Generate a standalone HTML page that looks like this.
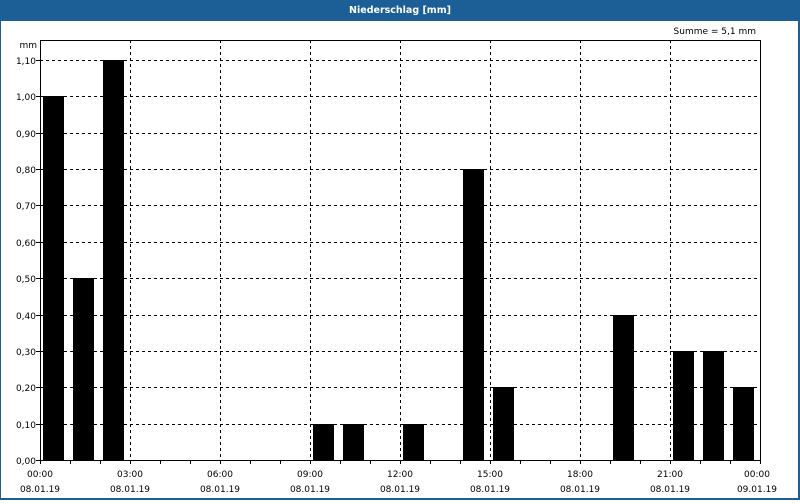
<!DOCTYPE html><html><head><style>body{margin:0;width:800px;height:500px;overflow:hidden;background:#fff;font-family:"DejaVu Sans","Liberation Sans",sans-serif}</style></head><body>
<svg width="800" height="500" xmlns="http://www.w3.org/2000/svg" font-family="DejaVu Sans, Liberation Sans, sans-serif" font-size="9">
<rect x="0" y="0" width="800" height="500" fill="#1c5f96"/>
<rect x="1" y="21" width="797" height="477" fill="#fff"/>
<text x="400" y="13" fill="#fff" font-weight="bold" text-anchor="middle" font-size="9.5">Niederschlag [mm]</text>
<text x="756" y="34" text-anchor="end">Summe = 5,1 mm</text>
<text x="37" y="48" text-anchor="end">mm</text>
<g stroke="#000" stroke-dasharray="3,3" stroke-width="1">
<path d="M40 60.5H760M40 96.5H760M40 133.5H760M40 169.5H760M40 205.5H760M40 242.5H760M40 278.5H760M40 315.5H760M40 351.5H760M40 387.5H760M40 424.5H760"/>
<path d="M130.5 40V460M220.5 40V460M310.5 40V460M400.5 40V460M490.5 40V460M580.5 40V460M670.5 40V460"/>
</g>
<g fill="#000">
<rect x="43" y="96" width="21" height="364"/>
<rect x="73" y="278" width="21" height="182"/>
<rect x="103" y="60" width="21" height="400"/>
<rect x="313" y="424" width="21" height="36"/>
<rect x="343" y="424" width="21" height="36"/>
<rect x="403" y="424" width="21" height="36"/>
<rect x="463" y="169" width="21" height="291"/>
<rect x="493" y="387" width="21" height="73"/>
<rect x="613" y="315" width="21" height="145"/>
<rect x="673" y="351" width="21" height="109"/>
<rect x="703" y="351" width="21" height="109"/>
<rect x="733" y="387" width="21" height="73"/>
</g>
<rect x="40.5" y="40.5" width="720" height="420" fill="none" stroke="#000"/>
<g stroke="#000">
<path d="M70.5 460v4M100.5 460v4M130.5 460v4M160.5 460v4M190.5 460v4M220.5 460v4M250.5 460v4M280.5 460v4M310.5 460v4M340.5 460v4M370.5 460v4M400.5 460v4M430.5 460v4M460.5 460v4M490.5 460v4M520.5 460v4M550.5 460v4M580.5 460v4M610.5 460v4M640.5 460v4M670.5 460v4M700.5 460v4M730.5 460v4M760.5 460v4M40.5 460v4"/>
<path d="M36 60.5h4M36 96.5h4M36 133.5h4M36 169.5h4M36 205.5h4M36 242.5h4M36 278.5h4M36 315.5h4M36 351.5h4M36 387.5h4M36 424.5h4M36 460.5h4"/>
</g>
<g text-anchor="end">
<text x="36" y="64">1,10</text><text x="36" y="100">1,00</text><text x="36" y="137">0,90</text><text x="36" y="173">0,80</text><text x="36" y="209">0,70</text><text x="36" y="246">0,60</text><text x="36" y="282">0,50</text><text x="36" y="319">0,40</text><text x="36" y="355">0,30</text><text x="36" y="391">0,20</text><text x="36" y="428">0,10</text><text x="36" y="464">0,00</text>
</g>
<g text-anchor="middle">
<text x="40" y="477">00:00</text><text x="40" y="492">08.01.19</text>
<text x="130" y="477">03:00</text><text x="130" y="492">08.01.19</text>
<text x="220" y="477">06:00</text><text x="220" y="492">08.01.19</text>
<text x="310" y="477">09:00</text><text x="310" y="492">08.01.19</text>
<text x="400" y="477">12:00</text><text x="400" y="492">08.01.19</text>
<text x="490" y="477">15:00</text><text x="490" y="492">08.01.19</text>
<text x="580" y="477">18:00</text><text x="580" y="492">08.01.19</text>
<text x="670" y="477">21:00</text><text x="670" y="492">08.01.19</text>
<text x="757" y="477">00:00</text><text x="757" y="492">09.01.19</text>
</g>
</svg>
</body></html>
